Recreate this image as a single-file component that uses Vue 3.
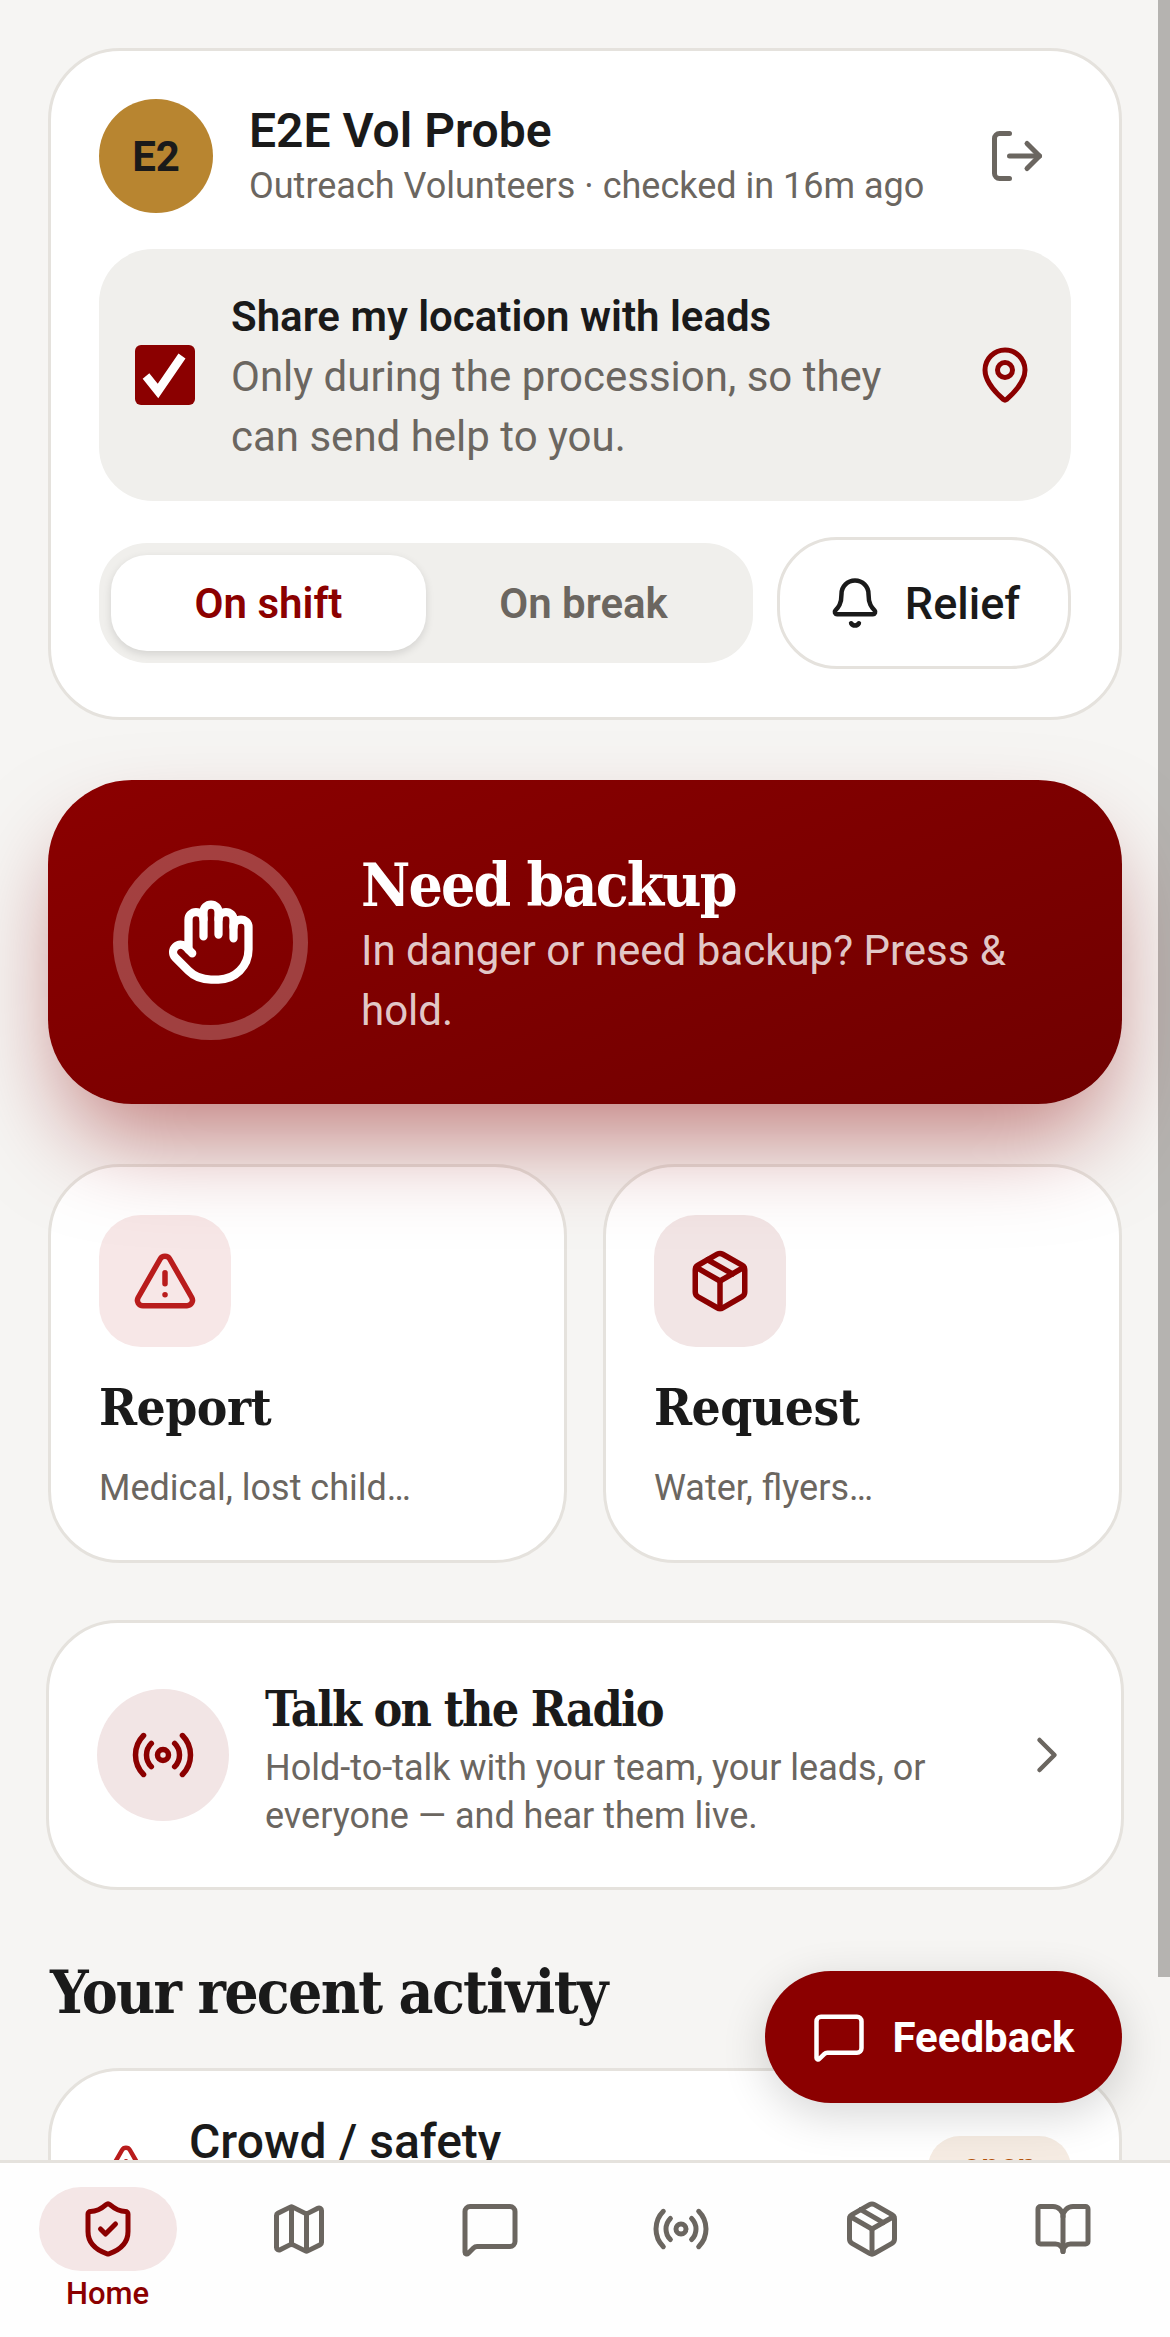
<script setup>
const tabs = [
  { name: 'home', label: 'Home', active: true, paths: ['M20 13c0 5-3.5 7.5-7.66 8.95a1 1 0 0 1-.67-.01C7.5 20.5 4 18 4 13V6a1 1 0 0 1 1-1c2 0 4.5-1.2 6.24-2.72a1.17 1.17 0 0 1 1.52 0C14.51 3.81 17 5 19 5a1 1 0 0 1 1 1z', 'm9 12 2 2 4-4'] },
  { name: 'map', paths: ['M14.106 5.553a2 2 0 0 0 1.788 0l3.659-1.83A1 1 0 0 1 21 4.619v12.764a1 1 0 0 1-.553.894l-4.553 2.277a2 2 0 0 1-1.788 0l-4.212-2.106a2 2 0 0 0-1.788 0l-3.659 1.83A1 1 0 0 1 3 19.381V6.618a1 1 0 0 1 .553-.894l4.553-2.277a2 2 0 0 1 1.788 0z', 'M15 5.764v15', 'M9 3.236v15'] },
  { name: 'chat', paths: ['M22 17a2 2 0 0 1-2 2H6.828a2 2 0 0 0-1.414.586l-2.202 2.202A.71.71 0 0 1 2 21.286V5a2 2 0 0 1 2-2h16a2 2 0 0 1 2 2z'] },
  { name: 'radio', paths: ['M16.247 7.761a6 6 0 0 1 0 8.478', 'M19.075 4.933a10 10 0 0 1 0 14.134', 'M4.925 19.067a10 10 0 0 1 0-14.134', 'M7.753 16.239a6 6 0 0 1 0-8.478', 'M14 12a2 2 0 1 1-4 0a2 2 0 1 1 4 0'] },
  { name: 'package', paths: ['M11 21.73a2 2 0 0 0 2 0l7-4A2 2 0 0 0 21 16V8a2 2 0 0 0-1-1.73l-7-4a2 2 0 0 0-2 0l-7 4A2 2 0 0 0 3 8v8a2 2 0 0 0 1 1.73z', 'M12 22V12', 'M3.29 7 12 12l8.71-5', 'm7.5 4.27 9 5.15'] },
  { name: 'book', paths: ['M12 7v14', 'M3 18a1 1 0 0 1-1-1V4a1 1 0 0 1 1-1h5a4 4 0 0 1 4 4 4 4 0 0 1 4-4h5a1 1 0 0 1 1 1v13a1 1 0 0 1-1 1h-6a3 3 0 0 0-3 3 3 3 0 0 0-3-3z'] }
]
</script>

<template>
  <div class="app">
    <main class="content">
      <section class="card profile">
        <div class="who">
          <div class="avatar">E2</div>
          <div class="who-text">
            <div class="name">E2E Vol Probe</div>
            <div class="team">Outreach Volunteers · checked in 16m ago</div>
          </div>
          <svg class="icon logout" viewBox="0 0 24 24">
            <path d="M9 21H5a2 2 0 0 1-2-2V5a2 2 0 0 1 2-2h4" />
            <path d="m16 17 5-5-5-5" />
            <path d="M21 12H9" />
          </svg>
        </div>

        <div class="share">
          <span class="checkbox">
            <svg viewBox="0 0 60 60"><path d="M11 31 23 46 47 11" /></svg>
          </span>
          <div class="share-text">
            <div class="share-title">Share my location with leads</div>
            <div class="share-desc">Only during the procession, so they can send help to you.</div>
          </div>
          <svg class="icon pin" viewBox="0 0 24 24">
            <path d="M20 10c0 4.993-5.539 10.193-7.399 11.799a1 1 0 0 1-1.202 0C9.539 20.193 4 14.993 4 10a8 8 0 0 1 16 0" />
            <circle cx="12" cy="10" r="3" />
          </svg>
        </div>

        <div class="status-row">
          <div class="segment">
            <button class="seg-btn active">On shift</button>
            <button class="seg-btn">On break</button>
          </div>
          <button class="relief">
            <svg class="icon bell" viewBox="0 0 24 24">
              <path d="M10.268 21a2 2 0 0 0 3.464 0" />
              <path d="M3.262 15.326A1 1 0 0 0 4 17h16a1 1 0 0 0 .74-1.673C19.41 13.956 18 12.499 18 8A6 6 0 0 0 6 8c0 4.499-1.411 5.956-2.738 7.326" />
            </svg>
            Relief
          </button>
        </div>
      </section>

      <section class="backup">
        <div class="ring">
          <svg class="icon hand" viewBox="0 0 24 24">
            <path d="M18 11V6a2 2 0 0 0-2-2a2 2 0 0 0-2 2" />
            <path d="M14 10V4a2 2 0 0 0-2-2a2 2 0 0 0-2 2v2" />
            <path d="M10 10.5V6a2 2 0 0 0-2-2a2 2 0 0 0-2 2v8" />
            <path d="M18 8a2 2 0 1 1 4 0v6a8 8 0 0 1-8 8h-2c-2.8 0-4.5-.86-5.99-2.34l-3.6-3.6a2 2 0 0 1 2.83-2.82L7 15" />
          </svg>
        </div>
        <div class="backup-text">
          <div class="backup-title">Need backup</div>
          <div class="backup-desc">In danger or need backup? Press &amp; hold.</div>
        </div>
      </section>

      <section class="actions">
        <div class="card action">
          <div class="tile tile-report">
            <svg class="icon tile-icon" viewBox="0 0 24 24">
              <path d="m21.73 18-8-14a2 2 0 0 0-3.48 0l-8 14A2 2 0 0 0 4 21h16a2 2 0 0 0 1.73-3Z" />
              <path d="M12 9v4" />
              <path d="M12 17h.01" />
            </svg>
          </div>
          <div class="action-title">Report</div>
          <div class="action-desc">Medical, lost child…</div>
        </div>
        <div class="card action">
          <div class="tile tile-request">
            <svg class="icon tile-icon" viewBox="0 0 24 24">
              <path d="M11 21.73a2 2 0 0 0 2 0l7-4A2 2 0 0 0 21 16V8a2 2 0 0 0-1-1.73l-7-4a2 2 0 0 0-2 0l-7 4A2 2 0 0 0 3 8v8a2 2 0 0 0 1 1.73z" />
              <path d="M12 22V12" />
              <path d="M3.29 7 12 12l8.71-5" />
              <path d="m7.5 4.27 9 5.15" />
            </svg>
          </div>
          <div class="action-title">Request</div>
          <div class="action-desc">Water, flyers…</div>
        </div>
      </section>

      <section class="card radio">
        <div class="radio-badge">
          <svg class="icon tile-icon" viewBox="0 0 24 24">
            <path d="M16.247 7.761a6 6 0 0 1 0 8.478" />
            <path d="M19.075 4.933a10 10 0 0 1 0 14.134" />
            <path d="M4.925 19.067a10 10 0 0 1 0-14.134" />
            <path d="M7.753 16.239a6 6 0 0 1 0-8.478" />
            <circle cx="12" cy="12" r="2" />
          </svg>
        </div>
        <div class="radio-text">
          <div class="radio-title">Talk on the Radio</div>
          <div class="radio-desc">Hold-to-talk with your team, your leads, or everyone — and hear them live.</div>
        </div>
        <svg class="icon chevron" viewBox="0 0 24 24"><path d="m9 18 6-6-6-6" /></svg>
      </section>

      <h2 class="recent-heading">Your recent activity</h2>

      <section class="card activity">
        <svg class="icon activity-icon" viewBox="0 0 24 24">
          <path d="m21.73 18-8-14a2 2 0 0 0-3.48 0l-8 14A2 2 0 0 0 4 21h16a2 2 0 0 0 1.73-3Z" />
          <path d="M12 9v4" />
          <path d="M12 17h.01" />
        </svg>
        <div class="activity-title">Crowd / safety</div>
        <span class="pill">open</span>
      </section>
    </main>

    <nav class="tabbar">
      <div v-for="tab in tabs" :key="tab.name" class="tab" :class="{ active: tab.active }">
        <span class="tab-icon">
          <svg class="icon" viewBox="0 0 24 24">
            <path v-for="d in tab.paths" :key="d" :d="d" />
          </svg>
        </span>
        <span v-if="tab.label" class="tab-label">{{ tab.label }}</span>
      </div>
    </nav>

    <button class="feedback">
      <svg class="icon" viewBox="0 0 24 24">
        <path d="M22 17a2 2 0 0 1-2 2H6.828a2 2 0 0 0-1.414.586l-2.202 2.202A.71.71 0 0 1 2 21.286V5a2 2 0 0 1 2-2h16a2 2 0 0 1 2 2z" />
      </svg>
      Feedback
    </button>

    <div class="scroll-thumb"></div>
  </div>
</template>

<style scoped>
.app {
  position: relative;
  width: 1170px;
  height: 2337px;
  display: flex;
  flex-direction: column;
  overflow: hidden;
  background: #f6f5f3;
  color: #1a1a1a;
  font-family: Roboto, "Liberation Sans", sans-serif;
}

.content {
  flex: 1;
  min-height: 0;
  overflow: hidden;
  padding: 48px 48px 0;
}

.icon {
  display: block;
  width: 60px;
  height: 60px;
  fill: none;
  stroke: currentColor;
  stroke-width: 2;
  stroke-linecap: round;
  stroke-linejoin: round;
  flex-shrink: 0;
}

.card {
  background: #fff;
  border: 3px solid #e5e2dd;
  border-radius: 72px;
}

.profile {
  padding: 48px;
}

.who {
  display: flex;
  align-items: center;
  gap: 36px;
}

.avatar {
  width: 114px;
  height: 114px;
  border-radius: 50%;
  background: #b88530;
  display: flex;
  align-items: center;
  justify-content: center;
  font-size: 42px;
  font-weight: 700;
  flex-shrink: 0;
}

.who-text {
  flex: 1;
}

.name {
  font-size: 48px;
  line-height: 58px;
  margin-bottom: 2px;
  font-weight: 600;
}

.team {
  font-size: 36px;
  line-height: 48px;
  color: #6b6660;
}

.logout {
  color: #6b6660;
  margin-right: 24px;
}

.share {
  margin-top: 36px;
  padding: 36px;
  display: flex;
  align-items: center;
  gap: 36px;
  background: #f0efec;
  border-radius: 54px;
}

.checkbox {
  width: 60px;
  height: 60px;
  border-radius: 6px;
  background: #8b0000;
  flex-shrink: 0;
}

.checkbox svg {
  display: block;
  width: 60px;
  height: 60px;
  fill: none;
  stroke: #fff;
  stroke-width: 8.5;
}

.share-text {
  flex: 1;
  margin: 2px 0 -2px;
}

.share-title {
  font-size: 42px;
  line-height: 60px;
  font-weight: 600;
}

.share-desc {
  font-size: 42px;
  line-height: 60px;
  color: #6b6660;
}

.pin {
  color: #8b0000;
}

.status-row {
  margin-top: 36px;
  display: flex;
  align-items: center;
  gap: 24px;
}

.segment {
  flex: 1;
  display: flex;
  padding: 12px;
  background: #f0efec;
  border-radius: 48px;
}

.seg-btn {
  flex: 1;
  height: 96px;
  border: none;
  border-radius: 36px;
  background: transparent;
  color: #6b6660;
  font-family: inherit;
  font-size: 42px;
  font-weight: 600;
}

.seg-btn.active {
  background: #fff;
  color: #8b0000;
  box-shadow: 0 3px 9px rgba(0, 0, 0, 0.12);
}

.relief {
  width: 294px;
  height: 132px;
  display: flex;
  align-items: center;
  justify-content: center;
  gap: 23px;
  background: #fff;
  border: 3px solid #e5e2dd;
  border-radius: 60px;
  color: #1a1a1a;
  font-family: inherit;
  font-size: 45px;
  font-weight: 500;
}

.bell {
  width: 54px;
  height: 54px;
}

.backup {
  position: relative;
  z-index: 1;
  margin-top: 60px;
  height: 324px;
  padding: 0 64px 0 65px;
  display: flex;
  align-items: center;
  gap: 53px;
  border-radius: 84px;
  background: linear-gradient(160deg, #8b0000, #700000);
  box-shadow: 0 48px 96px -18px rgba(139, 0, 0, 0.5);
  color: #fff;
}

.ring {
  width: 195px;
  height: 195px;
  box-sizing: border-box;
  border: 15px solid rgba(255, 255, 255, 0.25);
  border-radius: 50%;
  display: flex;
  align-items: center;
  justify-content: center;
  flex-shrink: 0;
}

.hand {
  width: 90px;
  height: 90px;
  stroke-width: 2.2;
}

.backup-text {
  margin: 3px 0 -3px;
}

.backup-title {
  font-family: "DejaVu Serif", serif;
  font-stretch: condensed;
  font-size: 60px;
  line-height: 72px;
  font-weight: 700;
  letter-spacing: -0.03em;
}

.backup-desc {
  font-size: 42px;
  line-height: 60px;
  color: rgba(255, 255, 255, 0.8);
}

.actions {
  margin-top: 60px;
  display: grid;
  grid-template-columns: 1fr 1fr;
  gap: 36px;
}

.action {
  padding: 48px;
}

.tile {
  width: 132px;
  height: 132px;
  border-radius: 42px;
  display: flex;
  align-items: center;
  justify-content: center;
}

.tile-report {
  background: #f7e7e7;
  color: #b91c1c;
}

.tile-request {
  background: #f2e5e5;
  color: #8b0000;
}

.tile-icon {
  width: 66px;
  height: 66px;
}

.action-title {
  margin-top: 27px;
  font-family: "DejaVu Serif", serif;
  font-stretch: condensed;
  font-size: 51px;
  line-height: 66px;
  font-weight: 700;
  letter-spacing: -0.01em;
}

.action-desc {
  margin-top: 24px;
  font-size: 36px;
  line-height: 48px;
  color: #6b6660;
}

.radio {
  margin: 57px -2px 0;
  height: 270px;
  box-sizing: border-box;
  padding: 0 48px;
  display: flex;
  align-items: center;
  gap: 36px;
}

.radio-badge {
  width: 132px;
  height: 132px;
  border-radius: 50%;
  background: #f2e5e5;
  color: #8b0000;
  display: flex;
  align-items: center;
  justify-content: center;
  flex-shrink: 0;
}

.radio-text {
  flex: 1;
  padding-top: 8px;
}

.radio-title {
  margin-bottom: 5px;
  font-family: "DejaVu Serif", serif;
  font-stretch: condensed;
  font-size: 48px;
  line-height: 60px;
  font-weight: 700;
  letter-spacing: -0.035em;
}

.radio-desc {
  font-size: 36px;
  line-height: 48px;
  color: #6b6660;
}

.chevron {
  color: #6b6660;
  stroke-width: 1.8;
  margin-right: -4px;
}

.recent-heading {
  margin: 66px 0 40px;
  padding-left: 2px;
  font-family: "DejaVu Serif", serif;
  font-stretch: condensed;
  font-size: 60px;
  line-height: 72px;
  font-weight: 700;
  letter-spacing: -0.028em;
}

.activity {
  padding: 48px;
  display: flex;
  align-items: center;
  gap: 36px;
  min-height: 98px;
}

.activity-icon {
  width: 54px;
  height: 54px;
  color: #b91c1c;
}

.activity-title {
  flex: 1;
  align-self: flex-start;
  margin-top: -7px;
  font-size: 48px;
  line-height: 60px;
  font-weight: 500;
}

.pill {
  padding: 8px 35px 12px;
  border-radius: 48px;
  background: #f5ebe2;
  color: #b45309;
  font-size: 33px;
  line-height: 44px;
  font-weight: 600;
}

.tabbar {
  position: relative;
  flex-shrink: 0;
  height: 177px;
  box-sizing: border-box;
  padding: 24px 12px 0;
  display: flex;
  background: #fefefe;
  border-top: 3px solid #e5e2dd;
}

.tab {
  flex: 1;
  display: flex;
  flex-direction: column;
  align-items: center;
  color: #6b6660;
}

.tab-icon {
  width: 138px;
  height: 84px;
  border-radius: 42px;
  display: flex;
  align-items: center;
  justify-content: center;
}

.tab.active {
  color: #8b0000;
}

.tab.active .tab-icon {
  background: #f4e6e6;
}

.tab-label {
  margin-top: 2px;
  font-size: 31px;
  line-height: 42px;
  font-weight: 500;
}

.feedback {
  position: absolute;
  right: 48px;
  bottom: 234px;
  width: 357px;
  height: 132px;
  display: flex;
  align-items: center;
  justify-content: center;
  gap: 26px;
  border: none;
  border-radius: 66px;
  background: #8b0000;
  color: #fff;
  box-shadow: 0 12px 45px rgba(0, 0, 0, 0.16);
  font-family: inherit;
  font-size: 42px;
  font-weight: 700;
}

.feedback .icon {
  width: 54px;
  height: 54px;
}

.scroll-thumb {
  position: absolute;
  top: 0;
  right: 0;
  width: 12px;
  height: 1977px;
  background: #b5b3b0;
}
</style>
